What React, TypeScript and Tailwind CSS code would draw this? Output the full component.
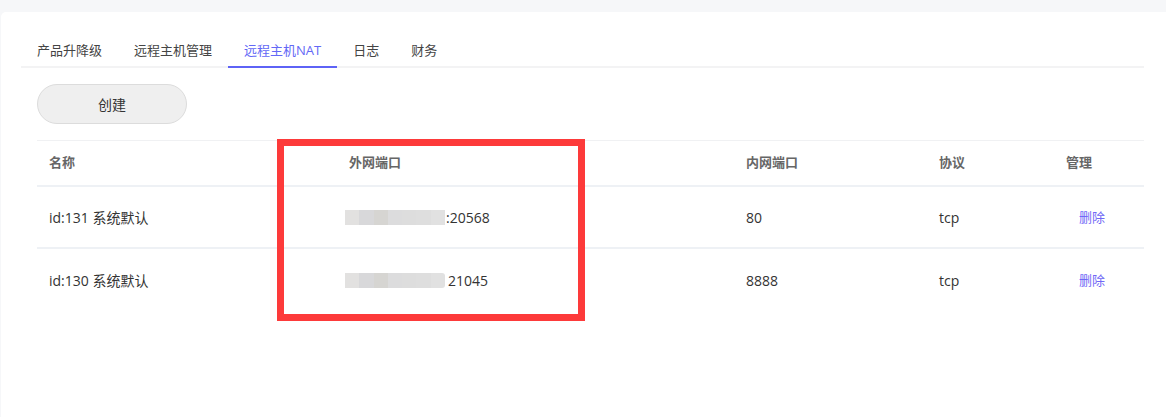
import type { ReactElement } from "react";

type NatRow = {
  readonly name: string;
  readonly externalPort: string;
  readonly internalPort: string;
  readonly protocol: string;
  readonly rounded: boolean;
};

const tabs = ["产品升降级", "远程主机管理", "远程主机NAT", "日志", "财务"];

const rows: NatRow[] = [
  { name: "id:131 系统默认", externalPort: ":20568", internalPort: "80", protocol: "tcp", rounded: false },
  { name: "id:130 系统默认", externalPort: "21045", internalPort: "8888", protocol: "tcp", rounded: true },
];

// the blurred host address, drawn as grey blocks
const blurShades = ["bg-[#e2e1e0]", "bg-[#d8d8da]", "bg-[#d6d5d2]", "bg-[#dcdcdd]", "bg-[#dddddd]", "bg-[#dedede]", "bg-[#e1e1e1]"];

export default function App(): ReactElement {
  return (
    <div className="relative h-[417px] overflow-hidden bg-[#f6f7f9] pt-3 pl-px font-['Open_Sans','Noto_Sans_CJK_SC',sans-serif]">
      <div className="h-full rounded-tl-[5px] bg-white pl-5 pr-[22px] pt-[28px]">
        <Tabs active={2} />
        <div className="pl-4 pt-4">
          <button
            type="button"
            className="h-10 w-[150px] rounded-full border border-[#dcdcdc] bg-[#efefef] text-[14px] text-[#333]"
          >
            创建
          </button>
          <NatTable />
        </div>
      </div>
      <div className="pointer-events-none absolute left-[277px] top-[139px] h-[182px] w-[308px] border-[7px] border-[#fd3a3a]" />
    </div>
  );
}

function Tabs({ active }: { readonly active: number }): ReactElement {
  return (
    <div className="flex border-b-2 border-[#f3f3f4]">
      {tabs.map((tab, i) => (
        <div
          key={tab}
          className={
            i === active
              ? "-mb-[2px] border-b-2 border-[#5e63f6] px-4 pb-[6px] text-[13px] leading-5 text-[#6368f6]"
              : "-mb-[2px] border-b-2 border-transparent px-4 pb-[6px] text-[13px] leading-5 text-[#444]"
          }
        >
          {tab}
        </div>
      ))}
    </div>
  );
}

function NatTable(): ReactElement {
  return (
    <div className="mt-4 border-t border-[#f0f1f3]">
      <div className="grid h-[46px] grid-cols-[300px_397px_193px_127px_1fr] items-center border-b-2 border-[#eef1f5] text-[13px] font-bold text-[#666]">
        <div className="pl-3">名称</div>
        <div className="pl-3">外网端口</div>
        <div className="pl-3">内网端口</div>
        <div className="pl-3">协议</div>
        <div className="pl-3">管理</div>
      </div>
      {rows.map((row, i) => (
        <div
          key={row.name}
          className={
            i < rows.length - 1
              ? "grid h-[62px] grid-cols-[300px_397px_193px_127px_1fr] items-center border-b-2 border-[#eef1f5] text-[14px] text-[#333]"
              : "grid h-[62px] grid-cols-[300px_397px_193px_127px_1fr] items-center text-[14px] text-[#333]"
          }
        >
          <div className="pl-3">{row.name}</div>
          <div className="flex items-center pl-2">
            <div className={row.rounded ? "flex h-[15px] w-[100px] overflow-hidden rounded-r-[3px]" : "flex h-[15px] w-[100px]"}>
              {blurShades.map((shade) => (
                <div key={shade} className={`h-full flex-1 ${shade}`} />
              ))}
            </div>
            <span className={row.rounded ? "ml-[3px]" : "ml-px"}>{row.externalPort}</span>
          </div>
          <div className="pl-3">{row.internalPort}</div>
          <div className="pl-3">{row.protocol}</div>
          <div className="pl-[25px]">
            <a className="cursor-pointer text-[13px] text-[#7168f6]">删除</a>
          </div>
        </div>
      ))}
    </div>
  );
}
